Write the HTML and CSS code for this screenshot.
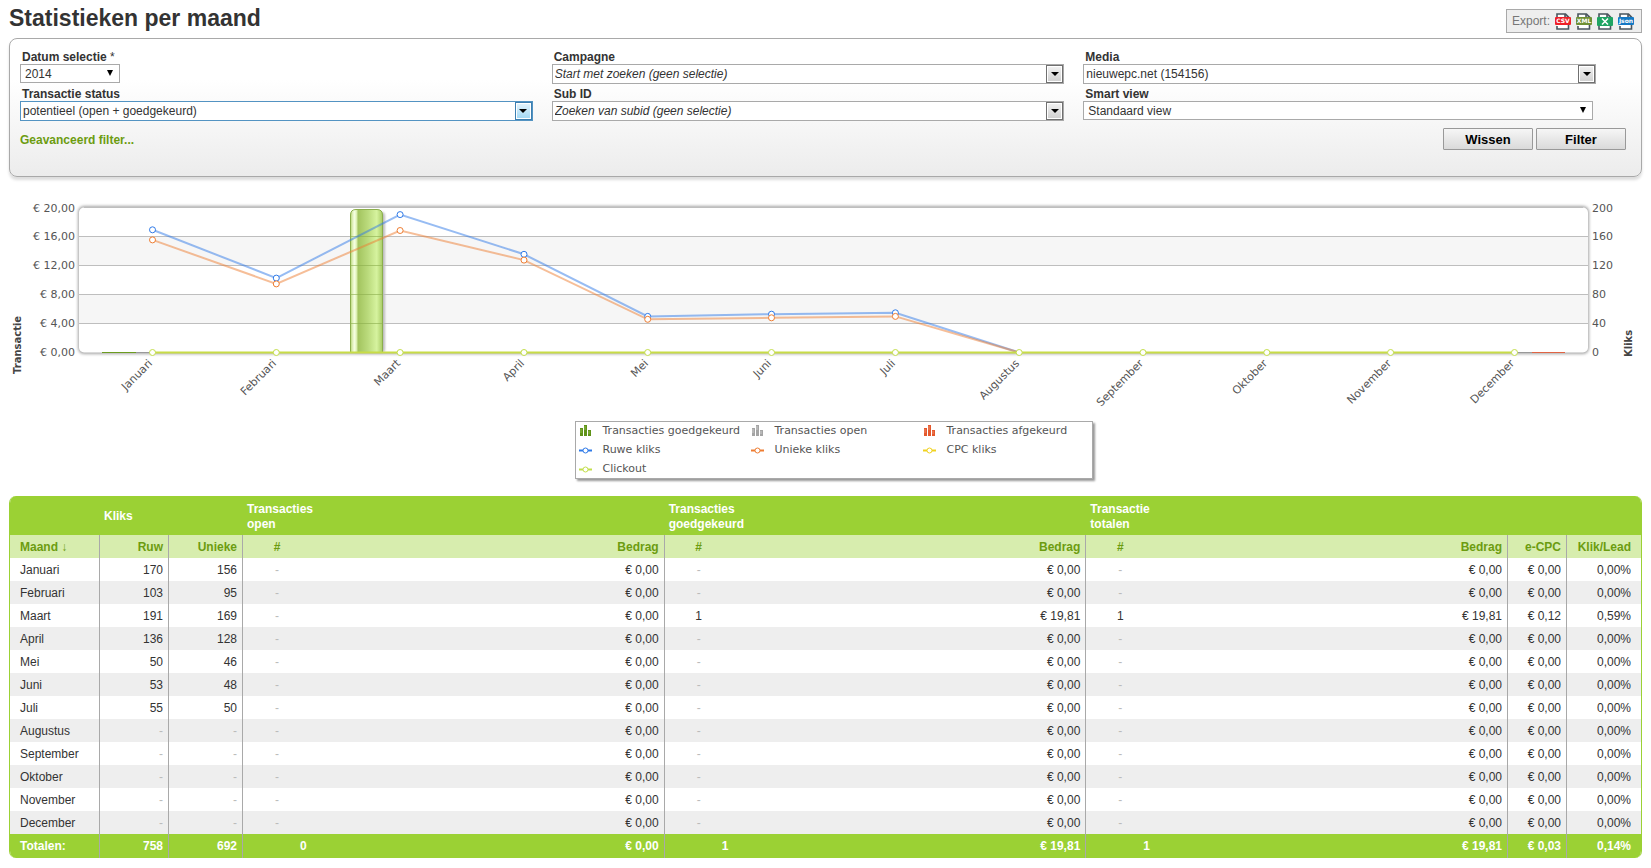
FILE: index.html
```html
<!DOCTYPE html>
<html lang="nl">
<head>
<meta charset="utf-8">
<title>Statistieken per maand</title>
<link rel="stylesheet" href="styles.css">
</head>
<body>
<header class="page-head">
  <h1 class="page-title">Statistieken per maand</h1>
  <div class="export">
    <span class="export-label">Export:</span>
    <a class="export-link" href="#csv" aria-label="CSV"><svg width="16" height="17" viewBox="0 0 16 17"><path d="M2 4V1h8.500l3 3v12H2v-3M10 1v3.500h3.500" fill="#fff" stroke="#4a555e" stroke-width="1.600"/><rect y="4" width="16" height="8" rx="1" fill="#ee2028"/><text class="icon-text" x="8" y="10">CSV</text></svg></a>
    <a class="export-link" href="#xml" aria-label="XML"><svg width="16" height="17" viewBox="0 0 16 17"><path d="M2 4V1h8.500l3 3v12H2v-3M10 1v3.500h3.500" fill="#fff" stroke="#4a555e" stroke-width="1.600"/><rect y="4" width="16" height="8" rx="1" fill="#6f9034"/><text class="icon-text" x="8" y="10">XML</text></svg></a>
    <a class="export-link" href="#excel" aria-label="Excel"><svg width="16" height="17" viewBox="0 0 16 17"><path d="M2 4V1h8.500l3 3v12H2v-3M10 1v3.500h3.500" fill="#fff" stroke="#4a555e" stroke-width="1.600"/><rect y="4" width="16" height="9" rx="1" fill="#1fa463"/><path d="M5 5.500l6 6M11 5.500l-6 6" stroke="#fff" stroke-width="1.500"/></svg></a>
    <a class="export-link" href="#json" aria-label="Json"><svg width="16" height="17" viewBox="0 0 16 17"><path d="M2 4V1h8.500l3 3v12H2v-3M10 1v3.500h3.500" fill="#fff" stroke="#4a555e" stroke-width="1.600"/><rect y="4" width="16" height="8" rx="1" fill="#1478c4"/><text class="icon-text" x="8" y="10">Json</text></svg></a>
  </div>
</header>

<form class="panel">
  <div class="fields">
    <div class="field">
      <label class="label" for="date">Datum selectie <span class="required">*</span></label>
      <div class="select select-small"><select id="date"><option>2014</option></select></div>
    </div>
    <div class="field">
      <label class="label" for="campaign">Campagne</label>
      <div class="combo"><input class="hint" id="campaign" type="text" value="Start met zoeken (geen selectie)"><button type="button" class="combo-button" aria-label="Campagne openen"></button></div>
    </div>
    <div class="field">
      <label class="label" for="media">Media</label>
      <div class="combo"><input id="media" type="text" value="nieuwepc.net (154156)"><button type="button" class="combo-button" aria-label="Media openen"></button></div>
    </div>
    <div class="field">
      <label class="label" for="status">Transactie status</label>
      <div class="combo combo-active"><input id="status" type="text" value="potentieel (open + goedgekeurd)"><button type="button" class="combo-button" aria-label="Status openen"></button></div>
    </div>
    <div class="field">
      <label class="label" for="subid">Sub ID</label>
      <div class="combo"><input class="hint" id="subid" type="text" value="Zoeken van subid (geen selectie)"><button type="button" class="combo-button" aria-label="Sub ID openen"></button></div>
    </div>
    <div class="field">
      <label class="label" for="view">Smart view</label>
      <div class="select"><select id="view"><option>Standaard view</option></select></div>
    </div>
  </div>
  <div class="actions">
    <a class="advanced" href="#filter">Geavanceerd filter...</a>
    <button type="reset" class="button">Wissen</button>
    <button type="submit" class="button">Filter</button>
  </div>
</form>

<section class="chart">
  <svg class="plot" viewBox="9 190 1633 220" role="img" aria-label="Transacties en kliks per maand">
    <defs>
      <linearGradient id="bar"><stop offset="0" stop-color="#b5d873"/><stop offset=".06" stop-color="#dcedb4"/><stop offset=".12" stop-color="#f6ffe2"/><stop offset=".18" stop-color="#e4f5bf"/><stop offset=".24" stop-color="#a3c45f"/><stop offset=".55" stop-color="#bbdb7d"/><stop offset=".82" stop-color="#d6f39f"/><stop offset="1" stop-color="#a9cc66"/></linearGradient>
      <filter id="glow" x="-5%" y="-10%" width="110%" height="120%"><feGaussianBlur stdDeviation="1.500"/></filter>
      <filter id="soft" x="-20%" y="-5%" width="140%" height="110%"><feGaussianBlur stdDeviation="1"/></filter>
    </defs>
    <rect x="78" y="206" width="1511" height="148" rx="6" fill="#a4a4a4" filter="url(#glow)"/>
    <rect x="79" y="207.500" width="1509" height="145" rx="5" fill="#fff"/>
    <path d="M79 236.500h1509v29H79zM79 294.500h1509v29H79z" fill="#f6f6f6"/>
    <path d="M79 236.500h1509M79 265.500h1509M79 294.500h1509M79 323.500h1509M84 207.500h1499" stroke="#bebebe"/>
    <rect x="353" y="212" width="32" height="141" rx="4" fill="#bbb" filter="url(#soft)"/>
    <path d="M350.500 352.500V215q0-5.500 5.500-5.500h21q5.500 0 5.500 5.500v137.500z" fill="url(#bar)" stroke="#8bae4c"/>
    <path d="M351 236.500h31M351 265.500h31M351 294.500h31M351 323.500h31" stroke="#8cae4e" opacity=".6"/>
    <path d="M102 352.500h34" stroke="#6c9c20"/>
    <path d="M136 352.500h16M1515 352.500h17" stroke="#999"/>
    <path d="M1532 352.500h33" stroke="#e06444"/>
    <polyline class="line blue" points="152.500,229.800 276.300,278.100 400.100,214.600 524,254.300 647.700,316.400 771.500,314.200 895.400,312.800 1019.200,352.500"/>
    <polyline class="line orange" points="152.500,239.900 276.300,283.900 400.100,230.500 524,260.100 647.700,319.300 771.500,317.800 895.400,316.400 1019.200,352.500"/>
    <path d="M152.500 352.500H1514.500" stroke="#c8dc46" stroke-width="2"/>
    <g class="dots blue"><circle cx="152.500" cy="229.800" r="3"/><circle cx="276.300" cy="278.100" r="3"/><circle cx="400.100" cy="214.600" r="3"/><circle cx="524" cy="254.300" r="3"/><circle cx="647.700" cy="316.400" r="3"/><circle cx="771.500" cy="314.200" r="3"/><circle cx="895.400" cy="312.800" r="3"/></g>
    <g class="dots orange"><circle cx="152.500" cy="239.900" r="3"/><circle cx="276.300" cy="283.900" r="3"/><circle cx="400.100" cy="230.500" r="3"/><circle cx="524" cy="260.100" r="3"/><circle cx="647.700" cy="319.300" r="3"/><circle cx="771.500" cy="317.800" r="3"/><circle cx="895.400" cy="316.400" r="3"/></g>
    <g class="dots lime"><circle cx="152.500" cy="352.500" r="3"/><circle cx="276.300" cy="352.500" r="3"/><circle cx="400.100" cy="352.500" r="3"/><circle cx="524" cy="352.500" r="3"/><circle cx="647.700" cy="352.500" r="3"/><circle cx="771.500" cy="352.500" r="3"/><circle cx="895.400" cy="352.500" r="3"/><circle cx="1019.200" cy="352.500" r="3"/><circle cx="1143" cy="352.500" r="3"/><circle cx="1266.800" cy="352.500" r="3"/><circle cx="1390.600" cy="352.500" r="3"/><circle cx="1514.500" cy="352.500" r="3"/></g>
    <g class="tick end"><text x="75" y="212">€ 20,00</text><text x="75" y="240">€ 16,00</text><text x="75" y="269">€ 12,00</text><text x="75" y="298">€ 8,00</text><text x="75" y="327">€ 4,00</text><text x="75" y="356">€ 0,00</text></g>
    <g class="tick"><text x="1592" y="212">200</text><text x="1592" y="240">160</text><text x="1592" y="269">120</text><text x="1592" y="298">80</text><text x="1592" y="327">40</text><text x="1592" y="356">0</text></g>
    <g class="tick end">
      <text transform="translate(153 364) rotate(-45)">Januari</text>
      <text transform="translate(277 364) rotate(-45)">Februari</text>
      <text transform="translate(401 364) rotate(-45)">Maart</text>
      <text transform="translate(525 364) rotate(-45)">April</text>
      <text transform="translate(649 364) rotate(-45)">Mei</text>
      <text transform="translate(772 364) rotate(-45)">Juni</text>
      <text transform="translate(896 364) rotate(-45)">Juli</text>
      <text transform="translate(1020 364) rotate(-45)">Augustus</text>
      <text transform="translate(1144 364) rotate(-45)">September</text>
      <text transform="translate(1268 364) rotate(-45)">Oktober</text>
      <text transform="translate(1392 364) rotate(-45)">November</text>
      <text transform="translate(1515 364) rotate(-45)">December</text>
    </g>
    <text class="axis" transform="translate(21 374) rotate(-90)">Transactie</text>
    <text class="axis" transform="translate(1632 357) rotate(-90)">Kliks</text>
  </svg>
  <div class="legend-row">
    <ul class="legend">
      <li><svg class="key" viewBox="0 0 14 12"><path d="M1 3h3v8H1zM5 0h3v11H5zM9 5h3v6H9z" fill="#5f9218"/><path d="M2 4v4M6 1v4M10 6v3" stroke="#8cbb48"/></svg>Transacties goedgekeurd</li>
      <li><svg class="key" viewBox="0 0 14 12"><path d="M1 3h3v8H1zM5 0h3v11H5zM9 5h3v6H9z" fill="#a4a4a4"/><path d="M2 4v4M6 1v4M10 6v3" stroke="#ccc"/></svg>Transacties open</li>
      <li><svg class="key" viewBox="0 0 14 12"><path d="M1 3h3v8H1zM5 0h3v11H5zM9 5h3v6H9z" fill="#e4582c"/><path d="M2 4v4M6 1v4M10 6v3" stroke="#f08a68"/></svg>Transacties afgekeurd</li>
      <li><svg class="key blue" viewBox="0 0 14 12"><path d="M0 6.500h13" stroke-width="2"/><circle cx="6.500" cy="6.500" r="2.500"/></svg>Ruwe kliks</li>
      <li><svg class="key orange" viewBox="0 0 14 12"><path d="M0 6.500h13" stroke-width="2"/><circle cx="6.500" cy="6.500" r="2.500"/></svg>Unieke kliks</li>
      <li><svg class="key yellow" viewBox="0 0 14 12"><path d="M0 6.500h13" stroke-width="2"/><circle cx="6.500" cy="6.500" r="2.500"/></svg>CPC kliks</li>
      <li><svg class="key lime" viewBox="0 0 14 12"><path d="M0 6.500h13" stroke-width="2"/><circle cx="6.500" cy="6.500" r="2.500"/></svg>Clickout</li>
    </ul>
  </div>
</section>

<div class="table-wrap">
<table class="stats">
  <colgroup><col class="c-month"><col class="c-raw"><col class="c-unique"><col class="c-count"><col><col class="c-count"><col><col class="c-count"><col><col class="c-cpc"><col class="c-lead"></colgroup>
  <thead>
    <tr class="groups"><th></th><th colspan="2">Kliks</th><th colspan="2">Transacties<br>open</th><th colspan="2">Transacties<br>goedgekeurd</th><th colspan="2">Transactie<br>totalen</th><th></th><th></th></tr>
    <tr class="heads"><th>Maand ↓</th><th>Ruw</th><th>Unieke</th><th class="count">#</th><th>Bedrag</th><th class="count">#</th><th>Bedrag</th><th class="count">#</th><th>Bedrag</th><th>e-CPC</th><th>Klik/Lead</th></tr>
  </thead>
  <tbody>
    <tr><td>Januari</td><td>170</td><td>156</td><td class="count nil">-</td><td>€ 0,00</td><td class="count nil">-</td><td>€ 0,00</td><td class="count nil">-</td><td>€ 0,00</td><td>€ 0,00</td><td>0,00%</td></tr>
    <tr><td>Februari</td><td>103</td><td>95</td><td class="count nil">-</td><td>€ 0,00</td><td class="count nil">-</td><td>€ 0,00</td><td class="count nil">-</td><td>€ 0,00</td><td>€ 0,00</td><td>0,00%</td></tr>
    <tr><td>Maart</td><td>191</td><td>169</td><td class="count nil">-</td><td>€ 0,00</td><td class="count">1</td><td>€ 19,81</td><td class="count">1</td><td>€ 19,81</td><td>€ 0,12</td><td>0,59%</td></tr>
    <tr><td>April</td><td>136</td><td>128</td><td class="count nil">-</td><td>€ 0,00</td><td class="count nil">-</td><td>€ 0,00</td><td class="count nil">-</td><td>€ 0,00</td><td>€ 0,00</td><td>0,00%</td></tr>
    <tr><td>Mei</td><td>50</td><td>46</td><td class="count nil">-</td><td>€ 0,00</td><td class="count nil">-</td><td>€ 0,00</td><td class="count nil">-</td><td>€ 0,00</td><td>€ 0,00</td><td>0,00%</td></tr>
    <tr><td>Juni</td><td>53</td><td>48</td><td class="count nil">-</td><td>€ 0,00</td><td class="count nil">-</td><td>€ 0,00</td><td class="count nil">-</td><td>€ 0,00</td><td>€ 0,00</td><td>0,00%</td></tr>
    <tr><td>Juli</td><td>55</td><td>50</td><td class="count nil">-</td><td>€ 0,00</td><td class="count nil">-</td><td>€ 0,00</td><td class="count nil">-</td><td>€ 0,00</td><td>€ 0,00</td><td>0,00%</td></tr>
    <tr><td>Augustus</td><td class="nil">-</td><td class="nil">-</td><td class="count nil">-</td><td>€ 0,00</td><td class="count nil">-</td><td>€ 0,00</td><td class="count nil">-</td><td>€ 0,00</td><td>€ 0,00</td><td>0,00%</td></tr>
    <tr><td>September</td><td class="nil">-</td><td class="nil">-</td><td class="count nil">-</td><td>€ 0,00</td><td class="count nil">-</td><td>€ 0,00</td><td class="count nil">-</td><td>€ 0,00</td><td>€ 0,00</td><td>0,00%</td></tr>
    <tr><td>Oktober</td><td class="nil">-</td><td class="nil">-</td><td class="count nil">-</td><td>€ 0,00</td><td class="count nil">-</td><td>€ 0,00</td><td class="count nil">-</td><td>€ 0,00</td><td>€ 0,00</td><td>0,00%</td></tr>
    <tr><td>November</td><td class="nil">-</td><td class="nil">-</td><td class="count nil">-</td><td>€ 0,00</td><td class="count nil">-</td><td>€ 0,00</td><td class="count nil">-</td><td>€ 0,00</td><td>€ 0,00</td><td>0,00%</td></tr>
    <tr><td>December</td><td class="nil">-</td><td class="nil">-</td><td class="count nil">-</td><td>€ 0,00</td><td class="count nil">-</td><td>€ 0,00</td><td class="count nil">-</td><td>€ 0,00</td><td>€ 0,00</td><td>0,00%</td></tr>
  </tbody>
  <tfoot>
    <tr><td>Totalen:</td><td>758</td><td>692</td><td class="count">0</td><td>€ 0,00</td><td class="count">1</td><td>€ 19,81</td><td class="count">1</td><td>€ 19,81</td><td>€ 0,03</td><td>0,14%</td></tr>
  </tfoot>
</table>
</div>
</body>
</html>
```

FILE: styles.css
```css
* { box-sizing: border-box; }

body {
  margin: 0;
  padding: 9px;
  background: #fff;
  color: #333;
  font: 12px/15px "Liberation Sans", Arial, sans-serif;
}

input, select, button { font: inherit; color: inherit; margin: 0; }

.page-head {
  display: flex;
  justify-content: space-between;
  align-items: flex-start;
  margin-bottom: 5px;
}
.page-title { margin: 0; font-size: 23px; line-height: 18px; }

.export {
  display: flex;
  align-items: center;
  gap: 5px;
  height: 24px;
  padding: 0 7px 0 5px;
  border: 1px solid #a9a9a9;
  background: #eee;
}
.export-label { color: #777; }
.export-link, .export-link svg { display: block; }
.icon-text {
  font: bold 6px "DejaVu Sans", sans-serif;
  text-anchor: middle;
  fill: #fff;
}

.panel {
  padding: 10px 15px 26px 10px;
  border: 1px solid #a9a9a9;
  border-radius: 8px;
  background: linear-gradient(#fff 30%, #ececec);
  box-shadow: 0 3px 3px #ddd;
}
.fields {
  display: grid;
  grid-template-columns: repeat(3, minmax(0, 1fr));
  gap: 2px 19px;
  padding-right: 30px;
}
.label {
  display: block;
  height: 15px;
  padding-left: 2px;
  font-weight: bold;
  line-height: 17px;
}
.required { font-weight: normal; }

.combo {
  display: flex;
  height: 20px;
  border: 1px solid #a9a9a9;
  background: #fff;
}
.combo input {
  flex: 1;
  min-width: 0;
  padding: 1px 2px 0;
  border: 0;
  background: none;
  outline: 0;
}
.combo .hint { font-style: italic; }
.combo-button {
  display: grid;
  place-items: center;
  width: 17px;
  padding: 0;
  border: 1px solid #707070;
  background: linear-gradient(#f2f2f2, #cfcfcf);
  box-shadow: inset 0 0 0 1px #fff;
}
.combo-button::before {
  content: "";
  border: 4px solid transparent;
  border-top-color: #000;
  border-bottom: 0;
}
.combo-active { border-color: #5393c2; }
.combo-active .combo-button {
  border-color: #3c7fb1;
  background: linear-gradient(#e5f4fc, #a0d8f5);
}

.select { position: relative; width: calc(100% - 3px); }
.select-small { width: 100px; }
.select select {
  display: block;
  width: 100%;
  height: 19px;
  padding: 1px 20px 0 4px;
  border: 1px solid #a9a9a9;
  border-radius: 0;
  background: #fff;
  appearance: none;
}
.select::after {
  content: "";
  position: absolute;
  top: 6px;
  right: 7px;
  border: 3px solid transparent;
  border-top: 6px solid #000;
  border-bottom: 0;
}

.actions {
  display: flex;
  align-items: center;
  gap: 3px;
  margin-top: 7px;
}
.advanced {
  margin-right: auto;
  padding-top: 2px;
  color: #6c9c10;
  font-weight: bold;
  text-decoration: none;
}
.button {
  width: 90px;
  height: 22px;
  padding: 0;
  border: 1px solid #999;
  border-radius: 1px;
  background: linear-gradient(#f6f6f6, #dadada);
  color: #000;
  font-size: 13px;
  font-weight: bold;
}

.chart { margin-top: 13px; }
.plot { display: block; width: 100%; }
.blue { stroke: #2f7ae8; }
.orange { stroke: #ee7d32; }
.yellow { stroke: #f0d21e; }
.lime { stroke: #c3de4c; }
.line { fill: none; stroke-width: 2; opacity: .5; }
.dots circle, .key circle { fill: #fff; }
.tick { font: 11px "DejaVu Sans", Verdana, sans-serif; fill: #555; }
.end { text-anchor: end; }
.axis { font: bold 10px "DejaVu Sans", Verdana, sans-serif; fill: #444; }

.legend-row {
  display: flex;
  justify-content: center;
  margin-top: 11px;
  padding: 0 54px 0 70px;
}
.legend {
  display: grid;
  grid-template-columns: repeat(3, 172px);
  grid-auto-rows: 19px;
  height: 58px;
  margin: 0;
  padding: 0 0 0 3px;
  width: 518px;
  border: 1px solid #a9a9a9;
  background: #fff;
  box-shadow: 2px 2px 2px #999;
  color: #555;
  font: 11px/17px "DejaVu Sans", Verdana, sans-serif;
  list-style: none;
}
.legend li {
  display: flex;
  align-items: center;
  gap: 10px;
  height: 17px;
  white-space: nowrap;
}
.key { width: 14px; height: 12px; }

.table-wrap {
  margin-top: 17px;
  overflow: hidden;
  border: 1px solid #9bd134;
  border-width: 0 1px;
  border-radius: 7px;
}
.stats {
  width: 100%;
  border-collapse: separate;
  border-spacing: 0;
  table-layout: fixed;
}
.c-month { width: 90px; }
.c-raw { width: 69px; }
.c-unique { width: 74px; }
.c-count { width: 70px; }
.c-cpc { width: 59px; }
.c-lead { width: 74px; }

.stats th, .stats td {
  height: 23px;
  padding: 2px 5px 0;
  text-align: right;
  white-space: nowrap;
}
.stats th:first-child, .stats td:first-child { padding-left: 10px; text-align: left; }
.stats th:last-child, .stats td:last-child { padding-right: 10px; }
.stats .count { text-align: center; padding: 2px 2px 0 0; }
.stats .nil { color: #bbb; }

.stats .groups th {
  height: 39px;
  padding-left: 4px;
  background: #9bd134;
  color: #fff;
  text-align: left;
}
.stats .heads th { background: #d7edae; color: #6c9c10; }
.stats tbody tr:nth-child(even) { background: #eee; }
.stats tfoot td {
  height: 24px;
  padding-top: 0;
  background: #9bd134;
  color: #fff;
  font-weight: bold;
}
.stats tfoot .count { padding: 0 0 0 57px; text-align: left; }

.heads th:not(.count, :last-child),
.stats td:not(.count, :last-child) { border-right: 1px solid #a9a9a9; }
```
